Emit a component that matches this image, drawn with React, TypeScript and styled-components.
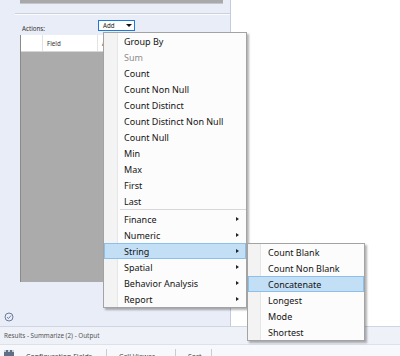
import React from 'react';
import styled, { createGlobalStyle } from 'styled-components';

const GlobalStyle = createGlobalStyle`
    html, body {
        margin: 0;
        padding: 0;
        width: 400px;
        height: 356px;
        overflow: hidden;
        background: #ffffff;
        font-family: "Noto Sans", "Open Sans", sans-serif;
    }
`;

const mainItems: { label: string; disabled?: boolean }[] = [
    { label: 'Group By' },
    { label: 'Sum', disabled: true },
    { label: 'Count' },
    { label: 'Count Non Null' },
    { label: 'Count Distinct' },
    { label: 'Count Distinct Non Null' },
    { label: 'Count Null' },
    { label: 'Min' },
    { label: 'Max' },
    { label: 'First' },
    { label: 'Last' },
];

const groupItems = ['Finance', 'Numeric', 'String', 'Spatial', 'Behavior Analysis', 'Report'];
const stringItems = ['Count Blank', 'Count Non Blank', 'Concatenate', 'Longest', 'Mode', 'Shortest'];

const Page = styled.div`
    position: relative;
    width: 400px;
    height: 356px;
    display: flex;
    flex-direction: column;
    overflow: hidden;
`;

const Workspace = styled.div`
    display: flex;
    height: 326px;
`;

const ConfigPanel = styled.div`
    width: 231px;
    box-sizing: border-box;
    display: flex;
    flex-direction: column;
    background: #e9edf7;
    border-right: 1px solid #c3cbdd;
`;

const Canvas = styled.div`
    flex: 1;
    background: #ffffff;
`;

const TopStrip = styled.div`
    height: 3px;
    margin: 0 7px 0 20px;
    background: #a9a9a9;
    border-bottom: 1px solid #c2c6cf;
`;

const Divider = styled.div`
    margin: 9px 0 0 15px;
    height: 0;
    border-top: 1px solid #ccd1dc;
    border-bottom: 1px solid #fafbfe;
`;

const ActionsRow = styled.div`
    display: flex;
    align-items: flex-start;
    height: 20px;
    box-sizing: border-box;
    padding: 5px 0 0 22px;
`;

const SmallLabel = styled.span`
    width: 76px;
    margin-top: 4.5px;
    font-size: 6.2px;
    line-height: 8px;
    color: #333;
`;

const AddSelect = styled.div`
    width: 37px;
    height: 11px;
    box-sizing: border-box;
    display: flex;
    align-items: center;
    justify-content: space-between;
    padding: 0 2px 0 4px;
    background: #ffffff;
    border: 1px solid #1a7ad4;
    font-size: 6.2px;
    color: #222;
`;

const Caret = styled.span`
    width: 0;
    height: 0;
    border-left: 3px solid transparent;
    border-right: 3px solid transparent;
    border-top: 3.5px solid #111;
`;

const Grid = styled.div`
    margin-left: 20px;
    width: 204px;
    height: 247px;
    display: flex;
    flex-direction: column;
    border-left: 1px solid #8a8a8a;
    box-sizing: border-box;
`;

const GridHeader = styled.div`
    display: flex;
    height: 17px;
    background: #ffffff;
    border-bottom: 1px solid #d6d6d6;
    box-sizing: border-box;
`;

const HeaderCell = styled.div<{ $w?: number }>`
    ${(p) => (p.$w ? `width: ${p.$w}px;` : 'flex: 1;')}
    box-sizing: border-box;
    display: flex;
    align-items: center;
    padding-left: 4px;
    border-right: 1px solid #e2e2e2;
    font-size: 6.2px;
    color: #333;
`;

const GridBody = styled.div`
    flex: 1;
    background: #ababab;
`;

const PanelFooter = styled.div`
    margin-top: auto;
    padding: 0 0 4px 4px;
    display: flex;
`;

const ResultsBar = styled.div`
    height: 19px;
    box-sizing: border-box;
    display: flex;
    align-items: center;
    padding-left: 4px;
    background: #eef1f8;
    border-top: 1px solid #cfd5e2;
    border-bottom: 1px solid #dde1ea;
    font-size: 6.3px;
    color: #555;
`;

const TabStrip = styled.div`
    flex: 1;
    display: flex;
    align-items: flex-start;
    background: #f7f8fb;
    padding: 4px 0 0 4px;
    font-size: 7px;
    color: #444;
    overflow: hidden;
`;

const TabIcon = styled.div`
    width: 10px;
    height: 9px;
    margin-top: 1px;
    box-sizing: border-box;
    background: #5f6f88;
    border-top: 2px dotted #c9cfdb;
`;

const Tab = styled.div<{ $w: number }>`
    width: ${(p) => p.$w}px;
    box-sizing: border-box;
    padding: 3px 0 0 12px;
    border-right: 1px solid #c9ccd4;
    height: 14px;
    white-space: nowrap;
    overflow: hidden;
`;

const Menu = styled.div`
    position: absolute;
    left: 103px;
    top: 32px;
    width: 144px;
    box-sizing: border-box;
    border: 1px solid #a3a3a3;
    background: linear-gradient(to right, #f3f3f3 0, #f3f3f3 13px, #e6e6e6 13px, #e6e6e6 14px, #fcfcfc 14px);
    box-shadow: 2px 2px 2px rgba(0, 0, 0, 0.3);
    font-size: 9px;
    color: #1b1b1b;
`;

const SubMenu = styled(Menu)`
    left: 247px;
    top: 243px;
    width: 118px;
    background: linear-gradient(to right, #f3f3f3 0, #f3f3f3 12px, #e6e6e6 12px, #e6e6e6 13px, #fcfcfc 13px);
`;

const Item = styled.div<{ $disabled?: boolean; $active?: boolean }>`
    height: 16px;
    box-sizing: border-box;
    display: flex;
    align-items: center;
    justify-content: space-between;
    padding: 0 6px 0 19px;
    white-space: nowrap;
    color: ${(p) => (p.$disabled ? '#8d8d8d' : '#141414')};
    background: ${(p) => (p.$active ? '#c3dff6' : 'transparent')};
    border: 1px solid ${(p) => (p.$active ? '#8cc0ea' : 'transparent')};
`;

const Separator = styled.div`
    height: 2px;
    margin-left: 16px;
    border-top: 1px solid #d7d7d7;
    box-sizing: border-box;
`;

const Arrow = styled.span`
    width: 0;
    height: 0;
    border-top: 2.5px solid transparent;
    border-bottom: 2.5px solid transparent;
    border-left: 3px solid #222;
`;

const StatusIcon = () => (
    <svg width="10" height="10" viewBox="0 0 10 10">
        <circle cx="5" cy="5" r="4" fill="none" stroke="#6a7c99" strokeWidth="1" />
        <path d="M3 5.2 L4.5 6.5 L7 3.6" fill="none" stroke="#6a7c99" strokeWidth="1" />
    </svg>
);

export default function App() {
    return (
        <Page>
            <GlobalStyle />
            <Workspace>
                <ConfigPanel>
                    <TopStrip />
                    <Divider />
                    <ActionsRow>
                        <SmallLabel>Actions:</SmallLabel>
                        <AddSelect>
                            Add
                            <Caret />
                        </AddSelect>
                    </ActionsRow>
                    <Grid>
                        <GridHeader>
                            <HeaderCell $w={22} />
                            <HeaderCell $w={55}>Field</HeaderCell>
                            <HeaderCell>Action</HeaderCell>
                        </GridHeader>
                        <GridBody />
                    </Grid>
                    <PanelFooter>
                        <StatusIcon />
                    </PanelFooter>
                </ConfigPanel>
                <Canvas />
            </Workspace>
            <ResultsBar>Results - Summarize (2) - Output</ResultsBar>
            <TabStrip>
                <TabIcon />
                <Tab $w={93}>Configuration Fields</Tab>
                <Tab $w={69}>Cell Viewer</Tab>
                <Tab $w={36}>Sort</Tab>
            </TabStrip>

            <Menu>
                {mainItems.map((it) => (
                    <Item key={it.label} $disabled={it.disabled}>
                        {it.label}
                    </Item>
                ))}
                <Separator />
                {groupItems.map((label) => (
                    <Item key={label} $active={label === 'String'}>
                        {label}
                        <Arrow />
                    </Item>
                ))}
            </Menu>
            <SubMenu>
                {stringItems.map((label) => (
                    <Item key={label} $active={label === 'Concatenate'}>
                        {label}
                    </Item>
                ))}
            </SubMenu>
        </Page>
    );
}
